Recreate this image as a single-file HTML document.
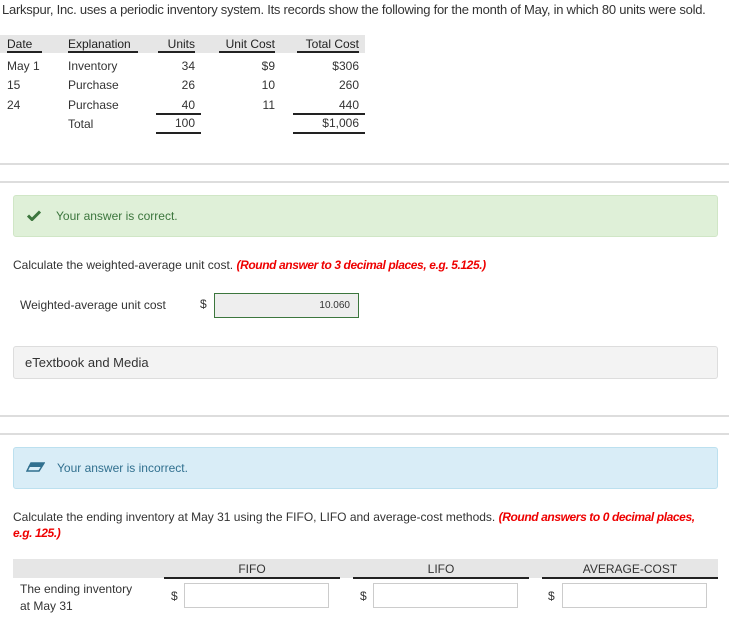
<!DOCTYPE html>
<html><head><meta charset="utf-8"><style>
body{margin:0;width:729px;height:634px;background:#fff;font-family:"Liberation Sans",sans-serif;font-size:12px;color:#333;position:relative;overflow:hidden}
.a{position:absolute;white-space:nowrap}
.r{text-align:right}
.ul{border-bottom:2px solid #222}
.hr{position:absolute;left:0;width:729px;height:0;border-top:2px solid #ddd}
.red{color:#e00;font-style:italic;font-weight:bold;letter-spacing:-0.4px}
.inp{position:absolute;background:#fff;border:1px solid #ccc;height:25px;box-sizing:border-box}
</style></head><body>
<div class="a" style="left:2px;top:2px;font-size:13px;letter-spacing:-0.25px">Larkspur, Inc. uses a periodic inventory system. Its records show the following for the month of May, in which 80 units were sold.</div>
<div class="a" style="left:0;top:35px;width:365px;height:18px;background:#e6e6e6"></div>
<div class="a ul" style="left:7px;top:37px;width:35px;color:#222">Date</div>
<div class="a ul" style="left:68px;top:37px;width:70px;color:#222">Explanation</div>
<div class="a ul r" style="left:158px;top:37px;width:37px;color:#222">Units</div>
<div class="a ul r" style="left:219px;top:37px;width:56px;color:#222">Unit Cost</div>
<div class="a ul r" style="left:297px;top:37px;width:62px;color:#222">Total Cost</div>
<div class="a" style="left:7px;top:57px;line-height:19.3px">May 1<br>15<br>24</div>
<div class="a" style="left:68px;top:57px;line-height:19.3px">Inventory<br>Purchase<br>Purchase<br>Total</div>
<div class="a r" style="left:158px;top:57px;width:37px;line-height:19.3px">34<br>26<br>40</div>
<div class="a r" style="left:219px;top:57px;width:56px;line-height:19.3px">$9<br>10<br>11</div>
<div class="a r" style="left:297px;top:57px;width:62px;line-height:19.3px">$306<br>260<br>440</div>
<div class="a" style="left:156px;top:113px;width:45px;border-top:2px solid #222"></div>
<div class="a r" style="left:158px;top:116px;width:37px">100</div>
<div class="a" style="left:156px;top:132px;width:45px;border-top:2px solid #222"></div>
<div class="a" style="left:293px;top:113px;width:72px;border-top:2px solid #222"></div>
<div class="a r" style="left:297px;top:116px;width:62px">$1,006</div>
<div class="a" style="left:293px;top:132px;width:72px;border-top:2px solid #222"></div>

<div class="hr" style="top:163px"></div>
<div class="hr" style="top:181px"></div>

<div class="a" style="left:13px;top:195px;width:705px;height:42px;background:#dff0d8;border:1px solid #d0e6c6;border-radius:3px;box-sizing:border-box"></div>
<svg class="a" style="left:27px;top:210px" width="14" height="11" viewBox="0 0 14 11"><path d="M1 5.5L5 9.5L13 1.5" stroke="#3c763d" stroke-width="3" fill="none"/></svg>
<div class="a" style="left:56px;top:209px;color:#3c763d">Your answer is correct.</div>

<div class="a" style="left:13px;top:258px">Calculate the weighted-average unit cost. <span class="red">(Round answer to 3 decimal places, e.g. 5.125.)</span></div>
<div class="a" style="left:20px;top:298px">Weighted-average unit cost</div>
<div class="a" style="left:200px;top:297px">$</div>
<div class="inp" style="left:214px;top:293px;width:145px;background:#eee;border-color:#3c763d"></div>
<div class="a r" style="left:214px;top:300px;width:136px;font-size:10px">10.060</div>

<div class="a" style="left:13px;top:346px;width:705px;height:33px;background:#f3f3f3;border:1px solid #ddd;border-radius:3px;box-sizing:border-box"></div>
<div class="a" style="left:25px;top:355px;font-size:13px">eTextbook and Media</div>

<div class="hr" style="top:415px"></div>
<div class="hr" style="top:433px"></div>

<div class="a" style="left:13px;top:447px;width:705px;height:42px;background:#d9edf7;border:1px solid #bce0ef;border-radius:3px;box-sizing:border-box"></div>
<svg class="a" style="left:26px;top:462px" width="19" height="10" viewBox="0 0 19 10"><path d="M5 1H18L13 9H1Z" fill="none" stroke="#31708f" stroke-width="1.5"/><path d="M5 1H18L15 5H2Z" fill="#31708f"/></svg>
<div class="a" style="left:57px;top:461px;color:#31708f">Your answer is incorrect.</div>

<div class="a" style="left:13px;top:510px">Calculate the ending inventory at May 31 using the FIFO, LIFO and average-cost methods. <span class="red">(Round answers to 0 decimal places,</span></div>
<div class="a red" style="left:13px;top:526px">e.g. 125.)</div>

<div class="a" style="left:13px;top:559px;width:705px;height:19px;background:#e6e6e6"></div>
<div class="a" style="left:164px;top:577px;width:176px;border-top:2px solid #222"></div>
<div class="a" style="left:353px;top:577px;width:176px;border-top:2px solid #222"></div>
<div class="a" style="left:542px;top:577px;width:176px;border-top:2px solid #222"></div>
<div class="a" style="left:164px;top:562px;width:176px;text-align:center">FIFO</div>
<div class="a" style="left:353px;top:562px;width:176px;text-align:center">LIFO</div>
<div class="a" style="left:542px;top:562px;width:176px;text-align:center">AVERAGE-COST</div>
<div class="a" style="left:20px;top:581px;line-height:17px">The ending inventory<br>at May 31</div>
<div class="a" style="left:171px;top:589px">$</div>
<div class="inp" style="left:184px;top:583px;width:145px"></div>
<div class="a" style="left:360px;top:589px">$</div>
<div class="inp" style="left:373px;top:583px;width:145px"></div>
<div class="a" style="left:548px;top:589px">$</div>
<div class="inp" style="left:562px;top:583px;width:145px"></div>
</body></html>
